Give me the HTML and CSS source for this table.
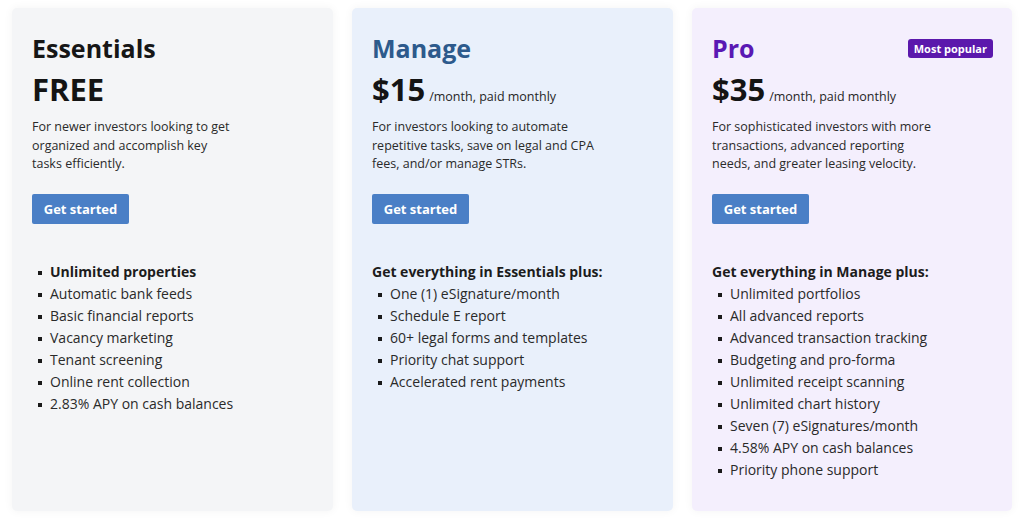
FILE: index.html
```html
<!DOCTYPE html>
<html lang="en">
<head>
<meta charset="utf-8">
<title>Pricing</title>
<link rel="stylesheet" href="styles.css">
</head>
<body>
<main class="plans">
  <section class="card card-essentials">
    <div class="title-row"><h2 class="title">Essentials</h2></div>
    <div class="price"><span class="amount">FREE</span></div>
    <p class="desc">For newer investors looking to get<br>organized and accomplish key<br>tasks efficiently.</p>
    <div><a class="btn" href="#">Get started</a></div>
    <ul class="features">
      <li class="strong">Unlimited properties</li>
      <li>Automatic bank feeds</li>
      <li>Basic financial reports</li>
      <li>Vacancy marketing</li>
      <li>Tenant screening</li>
      <li>Online rent collection</li>
      <li>2.83% APY on cash balances</li>
    </ul>
  </section>
  <section class="card card-manage">
    <div class="title-row"><h2 class="title">Manage</h2></div>
    <div class="price"><span class="amount">$15</span><span class="per">/month, paid monthly</span></div>
    <p class="desc">For investors looking to automate<br>repetitive tasks, save on legal and CPA<br>fees, and/or manage STRs.</p>
    <div><a class="btn" href="#">Get started</a></div>
    <p class="features-head">Get everything in Essentials plus:</p>
    <ul class="features">
      <li>One (1) eSignature/month</li>
      <li>Schedule E report</li>
      <li>60+ legal forms and templates</li>
      <li>Priority chat support</li>
      <li>Accelerated rent payments</li>
    </ul>
  </section>
  <section class="card card-pro">
    <div class="title-row"><h2 class="title">Pro</h2><span class="badge">Most popular</span></div>
    <div class="price"><span class="amount">$35</span><span class="per">/month, paid monthly</span></div>
    <p class="desc">For sophisticated investors with more<br>transactions, advanced reporting<br>needs, and greater leasing velocity.</p>
    <div><a class="btn" href="#">Get started</a></div>
    <p class="features-head">Get everything in Manage plus:</p>
    <ul class="features">
      <li>Unlimited portfolios</li>
      <li>All advanced reports</li>
      <li>Advanced transaction tracking</li>
      <li>Budgeting and pro-forma</li>
      <li>Unlimited receipt scanning</li>
      <li>Unlimited chart history</li>
      <li>Seven (7) eSignatures/month</li>
      <li>4.58% APY on cash balances</li>
      <li>Priority phone support</li>
    </ul>
  </section>
</main>
</body>
</html>
```

FILE: styles.css
```css
* { box-sizing: border-box; }
html, body { margin: 0; padding: 0; background: #ffffff; }
body {
  font-family: "Open Sans", "Liberation Sans", sans-serif;
  color: #1c1c1c;
  width: 1024px;
  height: 518px;
  overflow: hidden;
}
.plans {
  display: grid;
  grid-template-columns: 321px 321px 320px;
  gap: 19px;
  padding: 8px 11px 7px 12px;
  height: 518px;
}
.card {
  border-radius: 5px;
  padding: 24px 20px 0 20px;
  display: flex;
  flex-direction: column;
  box-shadow: 0 0 10px rgba(0, 0, 0, 0.05);
}
.card-essentials { background: #f4f5f7; }
.card-manage { background: #e9f0fb; }
.card-pro { background: #f4effd; }

.title-row {
  display: flex;
  justify-content: space-between;
  align-items: flex-start;
}
.title {
  margin: 0;
  font-size: 25px;
  line-height: 32px;
  font-weight: 700;
  color: #161616;
}
.card-manage .title { color: #2d5a8c; }
.card-pro .title { color: #5a18b4; }
.badge {
  margin-top: 7px;
  margin-right: -1px;
  background: #5b18ac;
  color: #ffffff;
  font-size: 11px;
  font-weight: 700;
  line-height: 19px;
  height: 19px;
  padding: 0 6px;
  border-radius: 3px;
}
.price {
  margin-top: 5px;
  line-height: 40px;
  height: 40px;
}
.amount {
  font-size: 31px;
  font-weight: 700;
  color: #141414;
}
.per {
  margin-left: 4px;
  font-size: 12.5px;
  color: #262626;
}
.desc {
  margin: 9px 0 0 0;
  font-size: 12.5px;
  line-height: 18.5px;
  color: #2a2a2a;
}
.btn {
  display: inline-block;
  margin-top: 20.5px;
  height: 30px;
  line-height: 30px;
  width: 97px;
  text-align: center;
  background: #4a7fc6;
  color: #ffffff;
  font-size: 13px;
  font-weight: 700;
  text-decoration: none;
  border-radius: 2px;
}
.features-head {
  margin: 36.5px 0 0 0;
  font-size: 14px;
  line-height: 22px;
  font-weight: 700;
  color: #1c1c1c;
}
.features {
  list-style: none;
  margin: 0;
  padding: 0;
  font-size: 14px;
  line-height: 22px;
  color: #2a2a2a;
}
.card-essentials .features { margin-top: 36.5px; }
.features li {
  position: relative;
  padding-left: 18px;
}
.features li::before {
  content: "";
  position: absolute;
  left: 6px;
  top: 10px;
  width: 4px;
  height: 4px;
  background: #1a1a1a;
}
.features li.strong { font-weight: 700; color: #1c1c1c; }
```
